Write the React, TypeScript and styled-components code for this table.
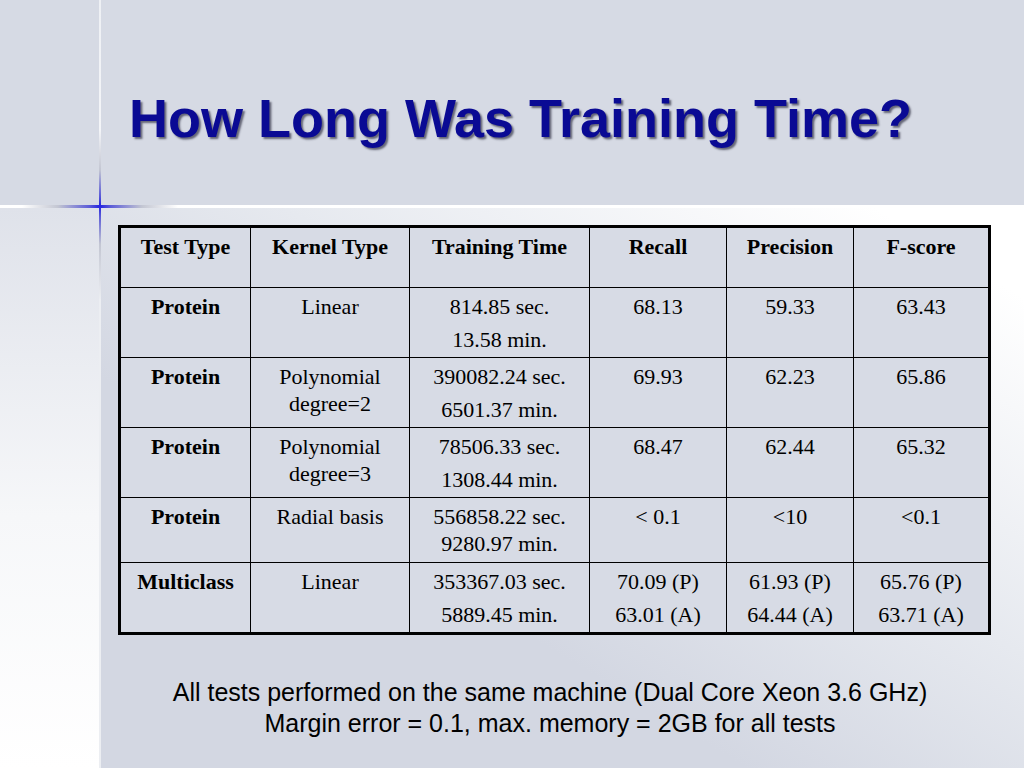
import React from "react";
import styled, { createGlobalStyle } from "styled-components";

const GlobalStyle = createGlobalStyle`
  html, body { margin: 0; padding: 0; background: #ffffff; }
  body { width: 1024px; height: 768px; overflow: hidden; }
  * { box-sizing: border-box; }
`;

const Slide = styled.div`
  position: relative;
  width: 1024px;
  height: 768px;
  display: flex;
  flex-direction: column;
  overflow: hidden;
  font-family: "Liberation Sans", Arial, sans-serif;
`;

const Header = styled.header`
  height: 205px;
  flex: none;
  background: #d6dae4;
  padding: 91px 0 0 129px;
`;

const Title = styled.h1`
  margin: 0;
  font-family: "Liberation Sans", Arial, sans-serif;
  font-weight: bold;
  font-size: 54px;
  line-height: 54px;
  color: #0a0a94;
  text-shadow: 2px 2px 2px rgba(25, 25, 45, 0.6);
  white-space: nowrap;
`;

const Divider = styled.div`
  height: 3px;
  flex: none;
  background: linear-gradient(
    to right,
    #ffffff 0px,
    #ffffff 22px,
    #c3c6d2 58px,
    #5a5ad8 90px,
    #2424e0 100px,
    #5a5ad8 110px,
    #c3c6d2 142px,
    #ffffff 178px,
    #ffffff 100%
  );
`;

const Body = styled.div`
  flex: 1;
  display: flex;
`;

const LeftStrip = styled.div`
  width: 99px;
  flex: none;
  background: linear-gradient(to bottom, #dfe2ea 0%, #f6f7f9 55%, #ffffff 100%);
`;

const Main = styled.main`
  flex: 1;
  display: flex;
  flex-direction: column;
  padding: 17px 0 0 19px;
  background: linear-gradient(to top right, #d3d7e2 35%, #e6e9ef 60%, #ffffff 92%);
`;

const VerticalRule = styled.div`
  position: absolute;
  left: 99px;
  top: 0;
  width: 2px;
  height: 768px;
  pointer-events: none;
  background: linear-gradient(
    to bottom,
    #eef0f4 0px,
    #f4f5f8 130px,
    #c3c6d2 170px,
    #5a5ad8 196px,
    #2424e0 206px,
    #5a5ad8 216px,
    #c3c6d2 244px,
    #eceef2 300px,
    #eceef2 100%
  );
`;

const Table = styled.table`
  width: 873px;
  border-collapse: separate;
  border-spacing: 0;
  table-layout: fixed;
  border: 3px solid #000;
  background: #d7dbe5;
  font-family: "Liberation Serif", "Times New Roman", serif;
  font-size: 22px;
  line-height: 27px;
  color: #000;
`;

const Row = styled.tr<{ $h: number }>`
  height: ${(p) => p.$h}px;
`;

const Cell = styled.td<{ $bold?: boolean; $first?: boolean; $top?: boolean }>`
  vertical-align: top;
  text-align: center;
  padding: 5px 4px 0;
  font-weight: ${(p) => (p.$bold ? "bold" : "normal")};
  border-left: ${(p) => (p.$first ? "none" : "1px solid #000")};
  border-top: ${(p) => (p.$top ? "none" : "1px solid #000")};
`;

const Para = styled.div<{ $gap?: boolean }>`
  margin-top: ${(p) => (p.$gap ? "6px" : "0")};
`;

const Note = styled.p`
  margin: 42px 0 0;
  width: 873px;
  padding-right: 9px;
  text-align: center;
  font-family: "Liberation Sans", Arial, sans-serif;
  font-size: 25px;
  line-height: 31px;
  color: #000;
`;

type CellData = string | string[];

const header = ["Test Type", "Kernel Type", "Training Time", "Recall", "Precision", "F-score"];

const rows: { h: number; cells: CellData[] }[] = [
  { h: 70, cells: ["Protein", "Linear", ["814.85 sec.", "13.58 min."], "68.13", "59.33", "63.43"] },
  { h: 70, cells: ["Protein", "Polynomial degree=2", ["390082.24 sec.", "6501.37 min."], "69.93", "62.23", "65.86"] },
  { h: 70, cells: ["Protein", "Polynomial degree=3", ["78506.33 sec.", "1308.44 min."], "68.47", "62.44", "65.32"] },
  { h: 65, cells: ["Protein", "Radial basis", "556858.22 sec. 9280.97 min.", "< 0.1", "<10", "<0.1"] },
  {
    h: 70,
    cells: [
      "Multiclass",
      "Linear",
      ["353367.03 sec.", "5889.45 min."],
      ["70.09 (P)", "63.01 (A)"],
      ["61.93 (P)", "64.44 (A)"],
      ["65.76 (P)", "63.71 (A)"],
    ],
  },
];

const colWidths = [129, 159, 180, 137, 127, 135];

const renderContent = (c: CellData) =>
  Array.isArray(c)
    ? c.map((line, i) => (
        <Para key={i} $gap={i > 0}>
          {line}
        </Para>
      ))
    : c;

export default function App() {
  return (
    <>
      <GlobalStyle />
      <Slide>
        <Header>
          <Title>How Long Was Training Time?</Title>
        </Header>
        <Divider />
        <Body>
          <LeftStrip />
          <Main>
            <Table>
              <colgroup>
                {colWidths.map((w, i) => (
                  <col key={i} style={{ width: w }} />
                ))}
              </colgroup>
              <thead>
                <Row $h={59}>
                  {header.map((h, i) => (
                    <Cell as="th" key={h} $bold $first={i === 0} $top>
                      {h}
                    </Cell>
                  ))}
                </Row>
              </thead>
              <tbody>
                {rows.map((r, ri) => (
                  <Row key={ri} $h={r.h}>
                    {r.cells.map((c, ci) => (
                      <Cell key={ci} $bold={ci === 0} $first={ci === 0}>
                        {renderContent(c)}
                      </Cell>
                    ))}
                  </Row>
                ))}
              </tbody>
            </Table>
            <Note>
              All tests performed on the same machine (Dual Core Xeon 3.6 GHz)
              <br />
              Margin error = 0.1, max. memory = 2GB for all tests
            </Note>
          </Main>
        </Body>
        <VerticalRule />
      </Slide>
    </>
  );
}
